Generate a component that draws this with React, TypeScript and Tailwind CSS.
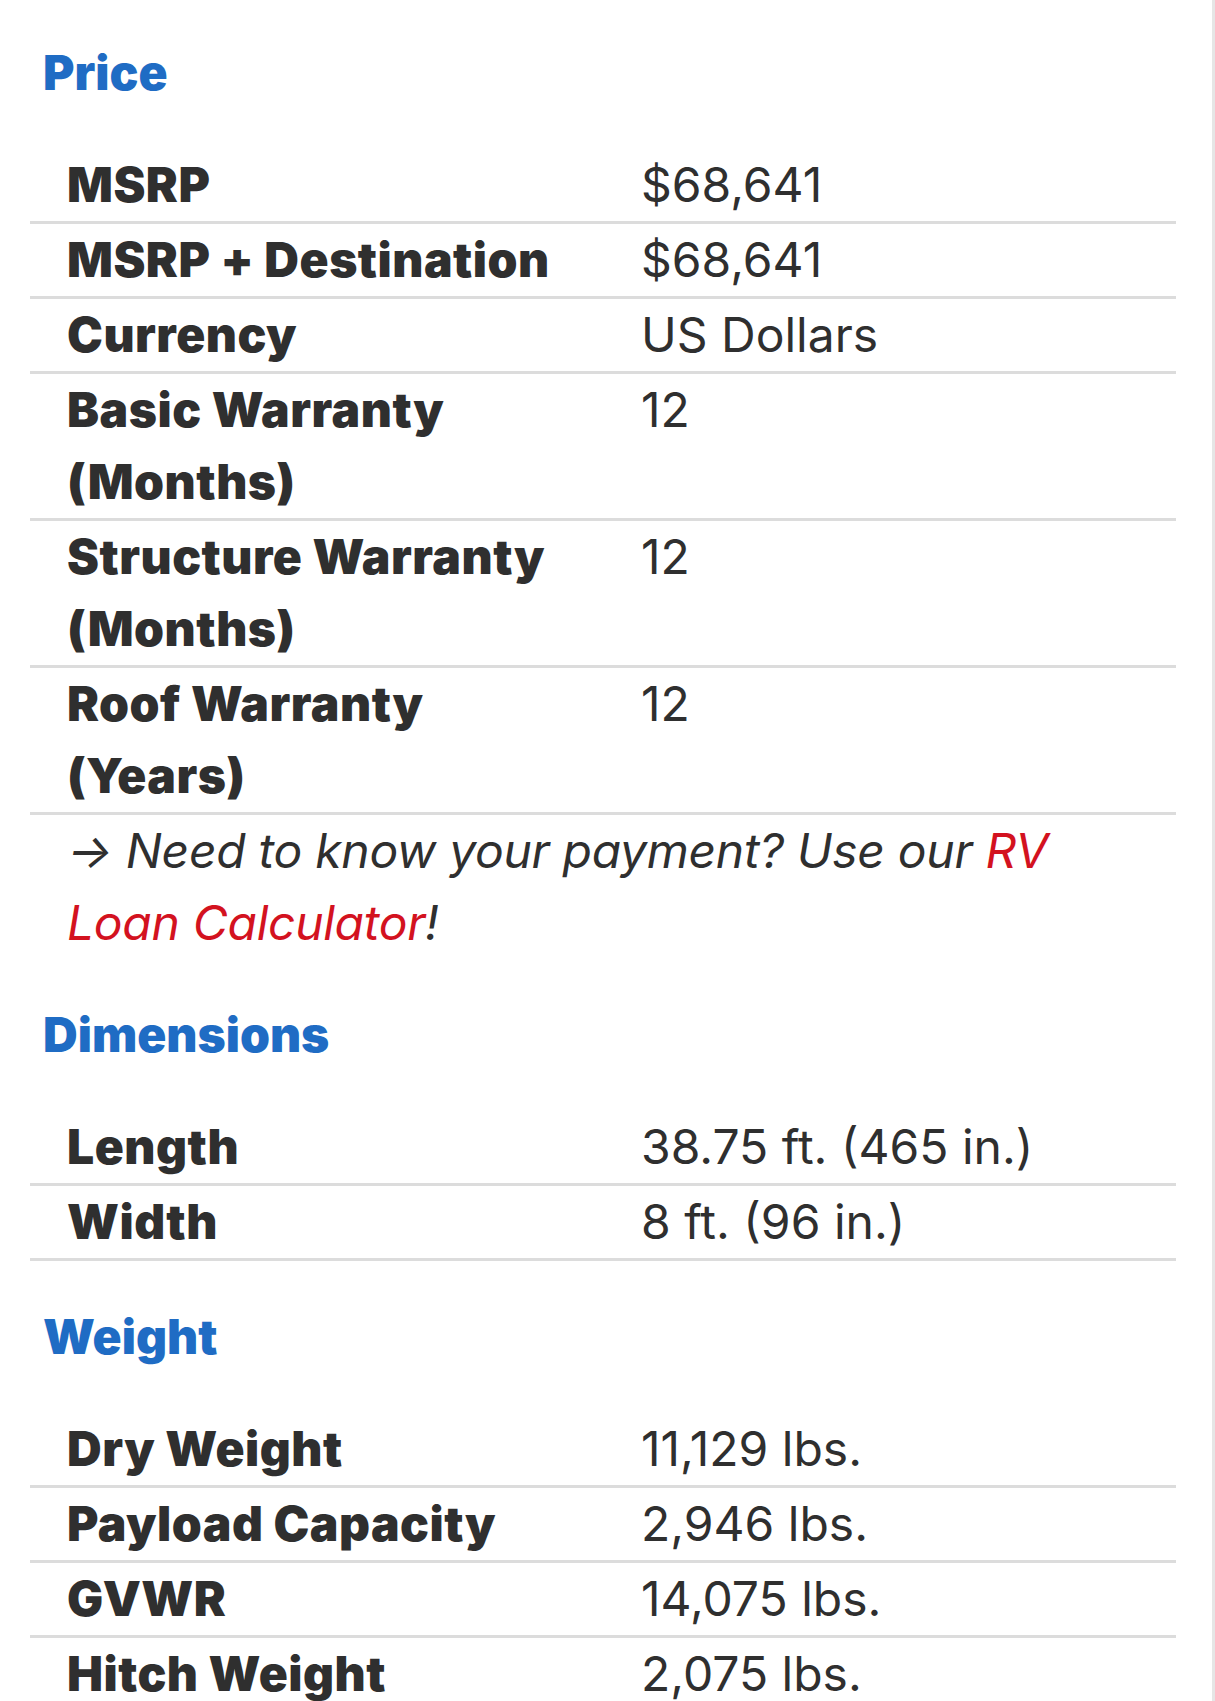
import React from 'react';

type Spec = { label: string; value: string };

const price: Spec[] = [
  { label: 'MSRP', value: '$68,641' },
  { label: 'MSRP + Destination', value: '$68,641' },
  { label: 'Currency', value: 'US Dollars' },
  { label: 'Basic Warranty (Months)', value: '12' },
  { label: 'Structure Warranty (Months)', value: '12' },
  { label: 'Roof Warranty (Years)', value: '12' },
];

const dimensions: Spec[] = [
  { label: 'Length', value: '38.75 ft. (465 in.)' },
  { label: 'Width', value: '8 ft. (96 in.)' },
];

const weight: Spec[] = [
  { label: 'Dry Weight', value: '11,129 lbs.' },
  { label: 'Payload Capacity', value: '2,946 lbs.' },
  { label: 'GVWR', value: '14,075 lbs.' },
  { label: 'Hitch Weight', value: '2,075 lbs.' },
];

function SectionTitle({ children, first }: { children: React.ReactNode; first?: boolean }) {
  return (
    <h2
      className={
        (first ? '' : 'mt-[40px] ') +
        'mb-[40px] pl-[43px] text-[48px] leading-[72px] font-black text-[#1f6cc4]'
      }
    >
      {children}
    </h2>
  );
}

function SpecTable({ rows }: { rows: Spec[] }) {
  return (
    <div className="ml-[30px] w-[1146px]">
      {rows.map((r) => (
        <div key={r.label} className="grid grid-cols-[611px_1fr] border-b-[3px] border-[#dcdcdc]">
          <div className="pl-[37px] pr-[30px] font-black tracking-[0.5px]">{r.label}</div>
          <div>{r.value}</div>
        </div>
      ))}
    </div>
  );
}

export default function App() {
  return (
    <div className="h-[1701px] overflow-hidden bg-white border-r-[3px] border-[#e6e6e6] pt-[37px] font-['Inter',sans-serif] text-[48px] leading-[72px] text-[#2f2f2f]">
      <SectionTitle first>Price</SectionTitle>
      <SpecTable rows={price} />
      <p className="pl-[67px] pr-[60px] italic tracking-[-0.3px]">
        → Need to know your payment? Use our{' '}
        <a href="#" className="text-[#d3121f]">
          RV Loan Calculator
        </a>
        !
      </p>

      <SectionTitle>Dimensions</SectionTitle>
      <SpecTable rows={dimensions} />

      <SectionTitle>Weight</SectionTitle>
      <SpecTable rows={weight} />
    </div>
  );
}
